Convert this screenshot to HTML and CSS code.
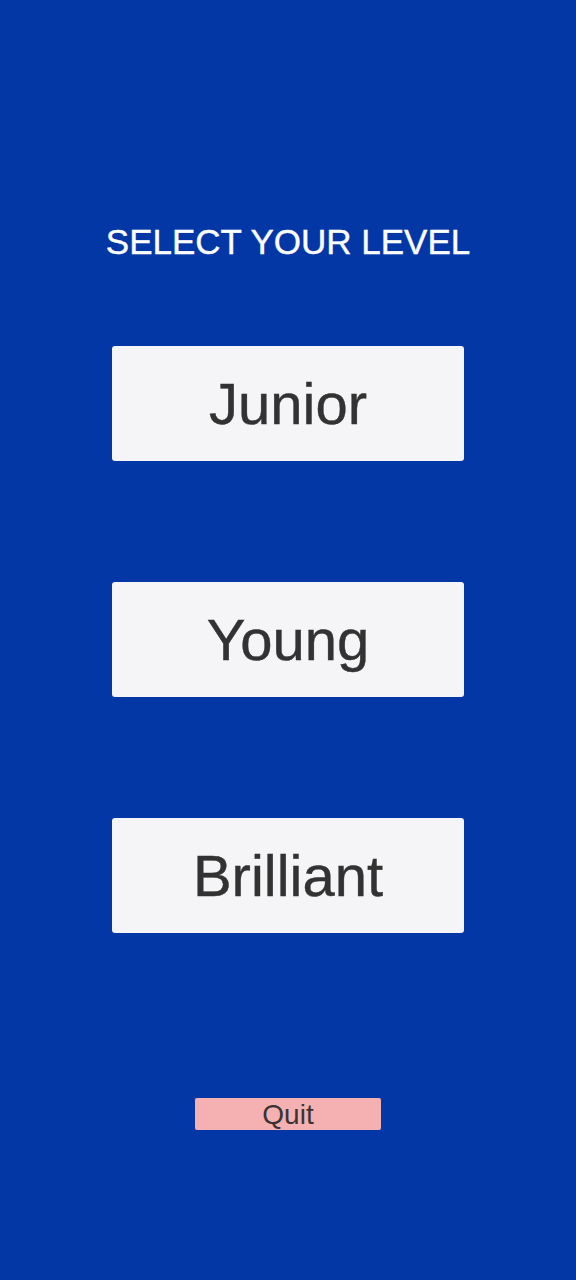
FILE: index.html
```html
<!DOCTYPE html>
<html>
	<head>
		<meta charset="UTF-8">
		<title>Select your level</title>
		<link rel="stylesheet" href="styles.css">
	</head>
	<body>
		<div class="screen">
			<h1 class="title">SELECT YOUR LEVEL</h1>
			<div class="levels">
				<button class="level">Junior</button>
				<button class="level">Young</button>
				<button class="level">Brilliant</button>
			</div>
			<button class="quit">Quit</button>
		</div>
	</body>
</html>
```

FILE: styles.css
```css
body {
	margin: 0;
	background-color: #0437a6;
	font-family: "Liberation Sans", Arial, sans-serif;
}

.screen {
	height: 1280px;
	display: flex;
	flex-direction: column;
	align-items: center;
	padding-top: 222px;
	box-sizing: border-box;
}

.title {
	margin: 0;
	font-size: 35px;
	line-height: 40px;
	font-weight: normal;
	color: #ffffff;
	-webkit-text-stroke: 0.4px #ffffff;
}

.levels {
	display: flex;
	flex-direction: column;
	gap: 121px;
	margin-top: 84px;
}

.level {
	width: 352px;
	height: 115px;
	padding: 0;
	border: none;
	border-radius: 3px;
	background-color: #f5f5f7;
	color: #323232;
	font-family: inherit;
	font-size: 58px;
	line-height: 115px;
	-webkit-text-stroke: 0.4px #323232;
}

.quit {
	margin-top: 165px;
	width: 186px;
	height: 32px;
	padding: 0;
	border: none;
	border-radius: 2px;
	background-color: #f5b0b2;
	color: #3a3334;
	font-family: inherit;
	font-size: 28px;
	line-height: 34px;
}
```
